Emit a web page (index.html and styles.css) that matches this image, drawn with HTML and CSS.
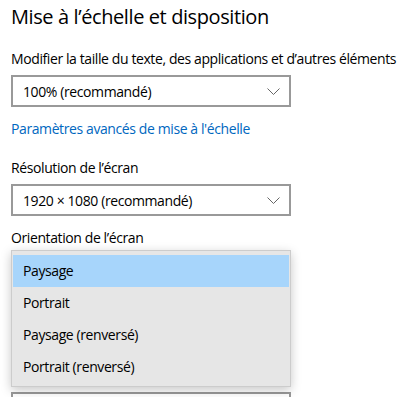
FILE: index.html
```html
<!DOCTYPE html>
<html lang="fr">
  <head>
    <meta charset="UTF-8" />
    <meta name="viewport" content="width=device-width, initial-scale=1.0" />
    <title>Mise à l’échelle et disposition</title>
    <link rel="stylesheet" href="styles.css">
  </head>
  <body>
    <div class="panel">
      <h1 class="title">Mise à l’échelle et disposition</h1>

      <div class="label first">Modifier la taille du texte, des applications et d’autres éléments</div>
      <div class="select">
        <span>100% (recommandé)</span>
        <svg class="chevron" width="13" height="7" viewBox="0 0 13 7"><path d="M0.5 0.5 L6.5 6.5 L12.5 0.5" fill="none" stroke="#666" stroke-width="1"/></svg>
      </div>

      <a class="link" href="#">Paramètres avancés de mise à l'échelle</a>

      <div class="label after-link">Résolution de l’écran</div>
      <div class="select">
        <span>1920 × 1080 (recommandé)</span>
        <svg class="chevron" width="13" height="7" viewBox="0 0 13 7"><path d="M0.5 0.5 L6.5 6.5 L12.5 0.5" fill="none" stroke="#666" stroke-width="1"/></svg>
      </div>

      <div class="label">Orientation de l’écran</div>
      <div class="dropdown">
        <div class="select">
          <span>Paysage</span>
        </div>
        <ul class="menu">
          <li class="selected">Paysage</li>
          <li>Portrait</li>
          <li>Paysage (renversé)</li>
          <li>Portrait (renversé)</li>
        </ul>
      </div>

      <div class="select next"></div>
    </div>
  </body>
</html>
```

FILE: styles.css
```css
body {
  margin: 0;
  font-family: "Open Sans", "Noto Sans", sans-serif;
  letter-spacing: -0.4px;
  color: #000;
  background: #fff;
  overflow: hidden;
}
.panel {
  padding: 0 11px;
}
.title {
  margin: 0;
  padding-top: 3px;
  font-size: 20px;
  font-weight: 400;
  line-height: 28px;
}
.label {
  font-size: 14px;
  line-height: 20px;
  margin-top: 12px;
  margin-bottom: 6px;
  white-space: nowrap;
}
.label.first {
  margin-top: 18px;
}
.label.after-link {
  margin-top: 19px;
}
.select {
  box-sizing: border-box;
  width: 280px;
  height: 32px;
  border: 2px solid #999;
  display: flex;
  align-items: center;
  justify-content: space-between;
  padding: 0 8px 0 10px;
  font-size: 14px;
  background: #fff;
}
.chevron {
  margin-right: 1px;
}
.link {
  display: block;
  margin-top: 12px;
  font-size: 14px;
  line-height: 20px;
  color: #0067c0;
  text-decoration: none;
}
.dropdown {
  position: relative;
}
.menu {
  position: absolute;
  top: -4px;
  left: 0;
  box-sizing: border-box;
  width: 280px;
  margin: 0;
  padding: 4px 1px 3px;
  list-style: none;
  background: #e6e6e6;
  border: 1px solid #cccccc;
  box-shadow: 0 3px 10px rgba(0, 0, 0, 0.22);
}
.menu li {
  height: 32px;
  line-height: 31px;
  padding-left: 10px;
  font-size: 14px;
}
.menu li.selected {
  background: #a7d5fb;
}
.next {
  margin-top: 106px;
}
```
